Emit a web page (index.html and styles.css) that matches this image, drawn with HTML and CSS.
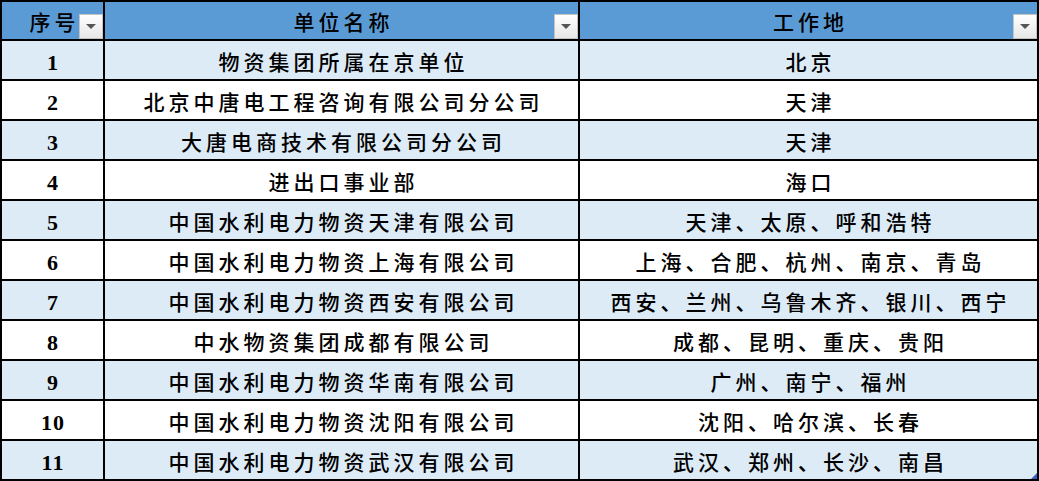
FILE: index.html
```html
<!DOCTYPE html>
<html lang="zh-CN">
<head>
<meta charset="utf-8">
<title>单位名称与工作地</title>
<link rel="stylesheet" href="styles.css">
</head>
<body>
<table class="sheet">
  <colgroup>
    <col class="c-no">
    <col class="c-name">
    <col class="c-place">
  </colgroup>
  <thead>
    <tr>
      <th><span class="txt">序号</span><span class="filter"></span></th>
      <th><span class="txt">单位名称</span><span class="filter"></span></th>
      <th><span class="txt">工作地</span><span class="filter"></span></th>
    </tr>
  </thead>
  <tbody>
    <tr class="band"><td class="num">1</td><td>物资集团所属在京单位</td><td>北京</td></tr>
    <tr><td class="num">2</td><td>北京中唐电工程咨询有限公司分公司</td><td>天津</td></tr>
    <tr class="band"><td class="num">3</td><td>大唐电商技术有限公司分公司</td><td>天津</td></tr>
    <tr><td class="num">4</td><td>进出口事业部</td><td>海口</td></tr>
    <tr class="band"><td class="num">5</td><td>中国水利电力物资天津有限公司</td><td>天津、太原、呼和浩特</td></tr>
    <tr><td class="num">6</td><td>中国水利电力物资上海有限公司</td><td>上海、合肥、杭州、南京、青岛</td></tr>
    <tr class="band"><td class="num">7</td><td>中国水利电力物资西安有限公司</td><td>西安、兰州、乌鲁木齐、银川、西宁</td></tr>
    <tr><td class="num">8</td><td>中水物资集团成都有限公司</td><td>成都、昆明、重庆、贵阳</td></tr>
    <tr class="band"><td class="num">9</td><td>中国水利电力物资华南有限公司</td><td>广州、南宁、福州</td></tr>
    <tr><td class="num">10</td><td>中国水利电力物资沈阳有限公司</td><td>沈阳、哈尔滨、长春</td></tr>
    <tr class="band"><td class="num">11</td><td>中国水利电力物资武汉有限公司</td><td class="last">武汉、郑州、长沙、南昌<span class="handle"></span></td></tr>
  </tbody>
</table>
</body>
</html>
```

FILE: styles.css
```css
html, body {
  margin: 0;
  padding: 0;
  background: #ffffff;
}

.sheet {
  width: 1039px;
  table-layout: fixed;
  border-collapse: separate;
  border-spacing: 2px;
  background: #000000;
  font-family: "Liberation Serif", "Noto Sans CJK SC", serif;
  font-size: 21px;
  font-weight: 500;
  color: #000000;
}

.c-no { width: 101px; }
.c-name { width: 473px; }
.c-place { width: 457px; }

.sheet th,
.sheet td {
  box-sizing: border-box;
  padding: 5px 0 0 4px;
  text-align: center;
  vertical-align: middle;
  letter-spacing: 4px;
  white-space: nowrap;
  line-height: 24px;
}

.sheet th {
  height: 37px;
  padding-top: 4px;
  background: #5b9bd5;
  position: relative;
  font-weight: 500;
}

.sheet td {
  height: 38px;
  background: #ffffff;
}

.sheet tr.band td {
  background: #ddebf7;
}

.sheet td.num {
  font-size: 22px;
  font-weight: bold;
  letter-spacing: 1px;
  padding-left: 1px;
}

.filter {
  position: absolute;
  right: 0;
  bottom: 0;
  width: 22px;
  height: 23px;
  border: 1px solid #c4c4c4;
  background: linear-gradient(#ffffff, #e6e6e6);
}

.filter::after {
  content: "";
  position: absolute;
  left: 6px;
  top: 9px;
  border-left: 5px solid transparent;
  border-right: 5px solid transparent;
  border-top: 5px solid #555555;
}

.sheet td.last {
  position: relative;
}

.handle {
  position: absolute;
  right: 0;
  bottom: 0;
  width: 0;
  height: 0;
  border-left: 6px solid transparent;
  border-bottom: 6px solid #3f5fbf;
}
```
